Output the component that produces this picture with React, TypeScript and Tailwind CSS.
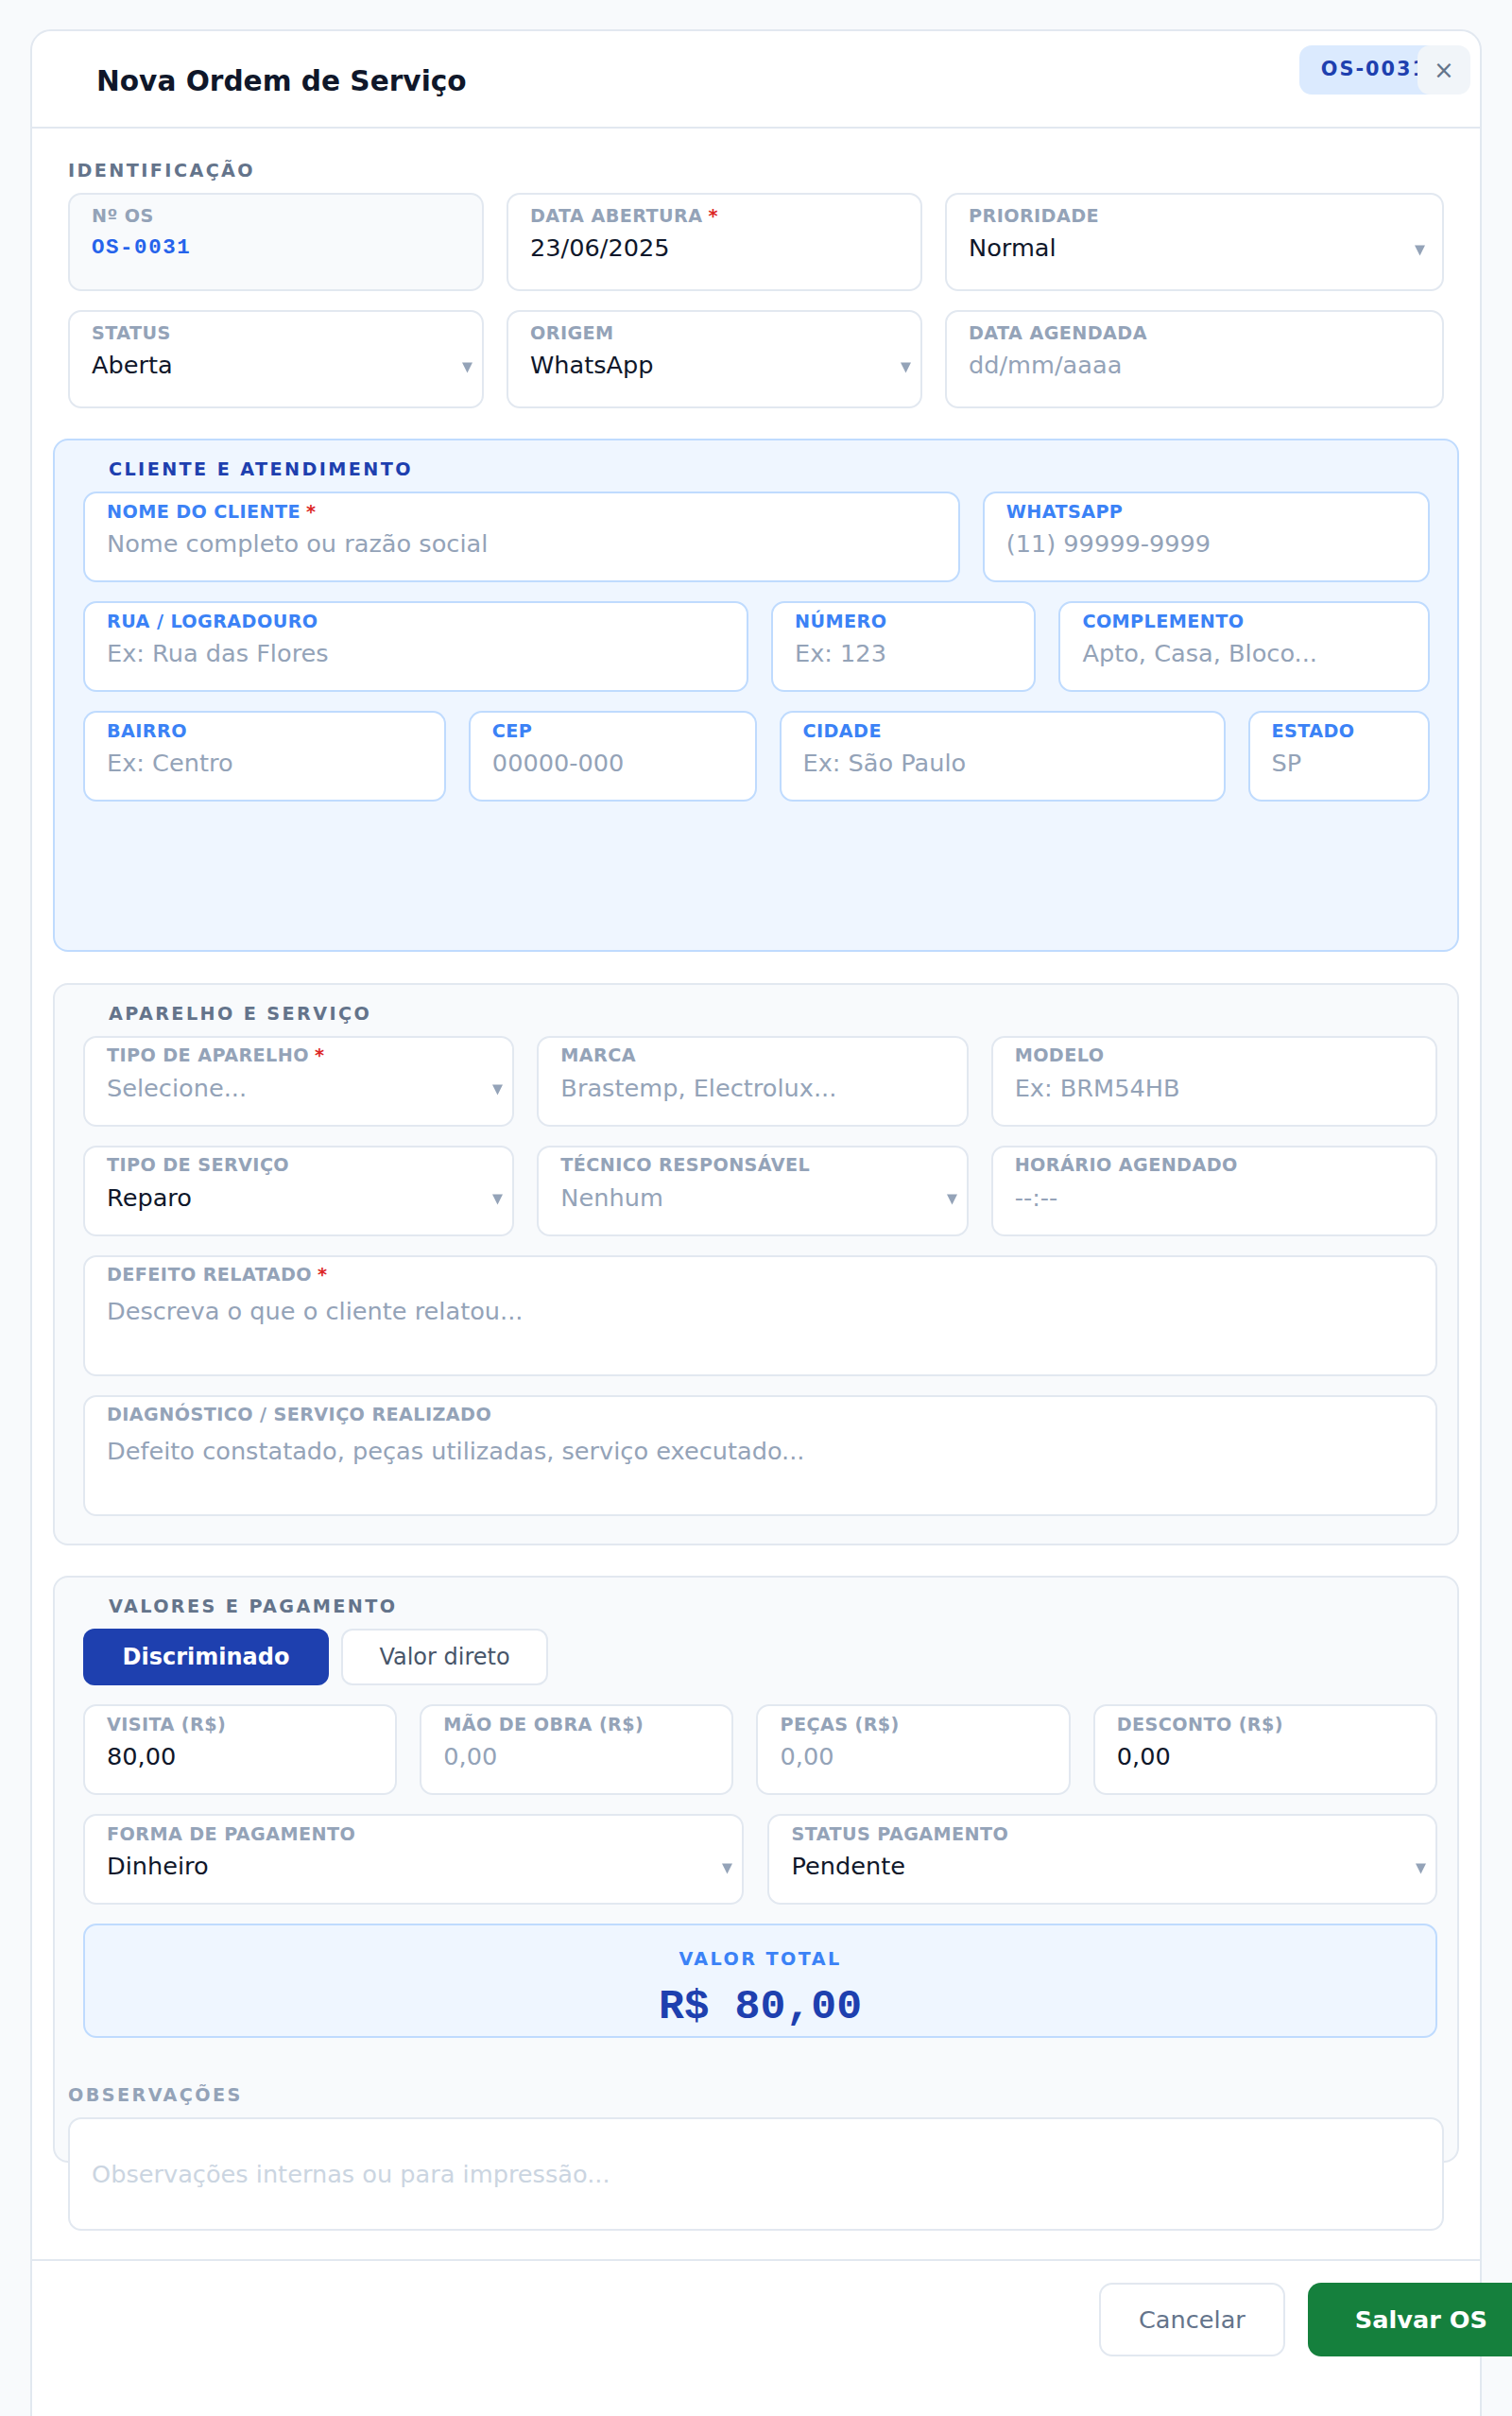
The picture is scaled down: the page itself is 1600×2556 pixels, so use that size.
import React from "react";

type Tone = "slate" | "blue";

function Caret({ inset }: { inset?: boolean }) {
  return (
    <svg
      viewBox="0 0 11 12"
      className={
        inset
          ? "mt-[5px] mr-[8px] h-[12px] w-[11px] shrink-0"
          : "mt-[5px] h-[12px] w-[11px] shrink-0"
      }
    >
      <path d="M0 0.5h11L5.5 11.5z" fill="#94a3b8" />
    </svg>
  );
}

type FieldProps = {
  label: string;
  required?: boolean;
  value?: string;
  placeholder?: string;
  select?: boolean;
  caretInset?: boolean;
  tone?: Tone;
  tall?: boolean;
  area?: boolean;
  mono?: boolean;
  shaded?: boolean;
};

function Field({
  label,
  required,
  value,
  placeholder,
  select,
  caretInset,
  tone = "slate",
  tall,
  area,
  mono,
  shaded,
}: FieldProps) {
  const box = [
    "flex flex-col rounded-[14px] border-2 pl-[23px] pr-[10px]",
    tone === "blue" ? "border-[#bfdbfe]" : "border-[#e2e8f0]",
    shaded ? "bg-[#f8fafc]" : "bg-white",
    area ? "h-[128px] pt-[7.5px]" : tall ? "h-[104px] pt-[11px]" : "h-[96px] pt-[7.5px]",
  ].join(" ");
  const labelCls =
    tone === "blue"
      ? "text-[19.2px] leading-[24px] font-bold tracking-[0.4px] text-[#3b82f6] whitespace-nowrap"
      : "text-[19.2px] leading-[24px] font-bold tracking-[0.4px] text-[#94a3b8] whitespace-nowrap";
  return (
    <div className={box}>
      <div className={labelCls}>
        {label}
        {required && <span className="ml-[6px] text-[#dc2626]">*</span>}
      </div>
      <div
        className={
          area
            ? "mt-[8px] flex items-center justify-between text-[25.6px] leading-[36px]"
            : "mt-[3.5px] flex items-center justify-between text-[25.6px] leading-[36px]"
        }
      >
        {mono ? (
          <span className="font-['Liberation_Mono',monospace] text-[22.4px] font-bold tracking-[1.6px] text-[#2563eb]">
            {value}
          </span>
        ) : value ? (
          <span className="text-[#0f172a] whitespace-nowrap">{value}</span>
        ) : (
          <span className="text-[#94a3b8] whitespace-nowrap">{placeholder}</span>
        )}
        {select && <Caret inset={caretInset} />}
      </div>
    </div>
  );
}

function SectionTitle({ children, blue }: { children: React.ReactNode; blue?: boolean }) {
  return (
    <div
      className={
        blue
          ? "mb-[11px] pl-[27px] text-[19.2px] leading-[24px] font-bold tracking-[2.4px] text-[#1e40af]"
          : "mb-[11px] pl-[27px] text-[19.2px] leading-[24px] font-bold tracking-[2.4px] text-[#64748b]"
      }
    >
      {children}
    </div>
  );
}

export default function App() {
  return (
    <div className="h-[2556px] overflow-hidden bg-[#f8fafc] px-[32px] pt-[31px] font-['DejaVu_Sans',sans-serif]">
      <div className="rounded-t-[22px] border-2 border-[#e2e8f0] bg-white">
        {/* Header */}
        <header className="flex h-[103px] items-start justify-between border-b-2 border-[#e2e8f0] pl-[68px] pr-[10px]">
          <h1 className="mt-[5px] self-center text-[29.6px] leading-[36px] font-bold text-[#0f172a]">
            Nova Ordem de Serviço
          </h1>
          <div className="mt-[15px] flex items-center">
            <span className="flex h-[52px] items-center rounded-[13px] bg-[#dbeafe] px-[23px] text-[20.8px] font-bold tracking-[2px] text-[#1e40af]">
              OS-0031
            </span>
            <button className="relative -ml-[34px] flex h-[52px] w-[56px] items-center justify-center rounded-[13px] bg-[#f1f5f9] text-[26px] text-[#64748b]">
              ×
            </button>
          </div>
        </header>

        {/* Body */}
        <div className="flex flex-col gap-[32.5px] px-[22px] pt-[32.5px] pb-[30px]">
          {/* Identificação */}
          <section className="px-[16px]">
            <div className="mb-[11px] text-[19.2px] leading-[24px] font-bold tracking-[2.4px] text-[#64748b]">
              IDENTIFICAÇÃO
            </div>
            <div className="grid grid-cols-[1fr_1fr_1.2fr] gap-x-[24px] gap-y-[20px]">
              <Field tall shaded label="Nº OS" value="OS-0031" mono />
              <Field tall label="DATA ABERTURA" required value="23/06/2025" />
              <Field tall label="PRIORIDADE" value="Normal" select caretInset />
              <Field tall label="STATUS" value="Aberta" select />
              <Field tall label="ORIGEM" value="WhatsApp" select />
              <Field tall label="DATA AGENDADA" placeholder="dd/mm/aaaa" />
            </div>
          </section>

          {/* Cliente e atendimento */}
          <section className="h-[543px] rounded-[16px] border-2 border-[#bfdbfe] bg-[#eff6ff] pt-[19px] pl-[30px] pr-[29px]">
            <SectionTitle blue>CLIENTE E ATENDIMENTO</SectionTitle>
            <div className="flex flex-col gap-[20px]">
              <div className="grid grid-cols-[927fr_473fr] gap-[24px]">
                <Field tone="blue" label="NOME DO CLIENTE" required placeholder="Nome completo ou razão social" />
                <Field tone="blue" label="WHATSAPP" placeholder="(11) 99999-9999" />
              </div>
              <div className="grid grid-cols-[703fr_280fr_392fr] gap-[24px]">
                <Field tone="blue" label="RUA / LOGRADOURO" placeholder="Ex: Rua das Flores" />
                <Field tone="blue" label="NÚMERO" placeholder="Ex: 123" />
                <Field tone="blue" label="COMPLEMENTO" placeholder="Apto, Casa, Bloco..." />
              </div>
              <div className="grid grid-cols-[383fr_304fr_471fr_192fr] gap-[24px]">
                <Field tone="blue" label="BAIRRO" placeholder="Ex: Centro" />
                <Field tone="blue" label="CEP" placeholder="00000-000" />
                <Field tone="blue" label="CIDADE" placeholder="Ex: São Paulo" />
                <Field tone="blue" label="ESTADO" placeholder="SP" />
              </div>
            </div>
          </section>

          {/* Aparelho e serviço */}
          <section className="rounded-[16px] border-2 border-[#e2e8f0] bg-[#f8fafc] pt-[19px] pb-[29px] pl-[30px] pr-[21px]">
            <SectionTitle>APARELHO E SERVIÇO</SectionTitle>
            <div className="flex flex-col gap-[20px]">
              <div className="grid grid-cols-[456fr_456fr_472fr] gap-[24px]">
                <Field label="TIPO DE APARELHO" required placeholder="Selecione..." select />
                <Field label="MARCA" placeholder="Brastemp, Electrolux..." />
                <Field label="MODELO" placeholder="Ex: BRM54HB" />
              </div>
              <div className="grid grid-cols-[456fr_456fr_472fr] gap-[24px]">
                <Field label="TIPO DE SERVIÇO" value="Reparo" select />
                <Field label="TÉCNICO RESPONSÁVEL" placeholder="Nenhum" select />
                <Field label="HORÁRIO AGENDADO" placeholder="--:--" />
              </div>
              <Field area label="DEFEITO RELATADO" required placeholder="Descreva o que o cliente relatou..." />
              <Field
                area
                label="DIAGNÓSTICO / SERVIÇO REALIZADO"
                placeholder="Defeito constatado, peças utilizadas, serviço executado..."
              />
            </div>
          </section>

          {/* Valores e pagamento */}
          <section className="h-[621px] rounded-[16px] border-2 border-[#e2e8f0] bg-[#f8fafc] pt-[19px] pl-[30px] pr-[21px]">
            <SectionTitle>VALORES E PAGAMENTO</SectionTitle>
            <div className="flex gap-[13px]">
              <button className="h-[60px] w-[260px] rounded-[12px] bg-[#1e40af] text-[24px] font-bold text-white">
                Discriminado
              </button>
              <button className="h-[60px] w-[219px] rounded-[12px] border-2 border-[#e2e8f0] bg-white text-[24px] text-[#475569]">
                Valor direto
              </button>
            </div>
            <div className="mt-[20px] flex flex-col gap-[20px]">
              <div className="grid grid-cols-[332fr_332fr_332fr_364fr] gap-[24px]">
                <Field label="VISITA (R$)" value="80,00" />
                <Field label="MÃO DE OBRA (R$)" placeholder="0,00" />
                <Field label="PEÇAS (R$)" placeholder="0,00" />
                <Field label="DESCONTO (R$)" value="0,00" />
              </div>
              <div className="grid grid-cols-[699fr_708fr] gap-[25px]">
                <Field label="FORMA DE PAGAMENTO" value="Dinheiro" select />
                <Field label="STATUS PAGAMENTO" value="Pendente" select />
              </div>
              <div className="flex h-[121px] flex-col items-center rounded-[14px] border-2 border-[#bfdbfe] bg-[#eff6ff] pt-[23.5px]">
                <div className="text-[19.2px] leading-[24px] font-bold tracking-[2.4px] text-[#3b82f6]">
                  VALOR TOTAL
                </div>
                <div className="mt-[12px] font-['Liberation_Mono',monospace] text-[44.8px] leading-[52px] font-bold text-[#1e40af]">
                  R$ 80,00
                </div>
              </div>
            </div>
          </section>

          {/* Observações */}
          <section className="relative z-10 -mt-[115.5px] px-[16px]">
            <div className="mb-[11px] text-[19.2px] leading-[24px] font-bold tracking-[2.4px] text-[#94a3b8]">
              OBSERVAÇÕES
            </div>
            <div className="flex h-[120px] items-center rounded-[14px] border-2 border-[#e2e8f0] bg-white px-[23px] text-[25.6px] text-[#cbd5e1]">
              Observações internas ou para impressão...
            </div>
          </section>
        </div>

        {/* Footer */}
        <footer className="flex h-[220px] items-start justify-end gap-[24px] border-t-2 border-[#e2e8f0] pt-[23px] pr-[31px]">
          <button className="h-[78px] rounded-[14px] border-2 border-[#e2e8f0] bg-white px-[40px] text-[25.6px] text-[#64748b]">
            Cancelar
          </button>
          <button className="-mr-[89px] h-[78px] shrink-0 rounded-[14px] bg-[#15803d] px-[50px] text-[25.6px] font-bold text-white">
            Salvar OS
          </button>
        </footer>
      </div>
    </div>
  );
}
